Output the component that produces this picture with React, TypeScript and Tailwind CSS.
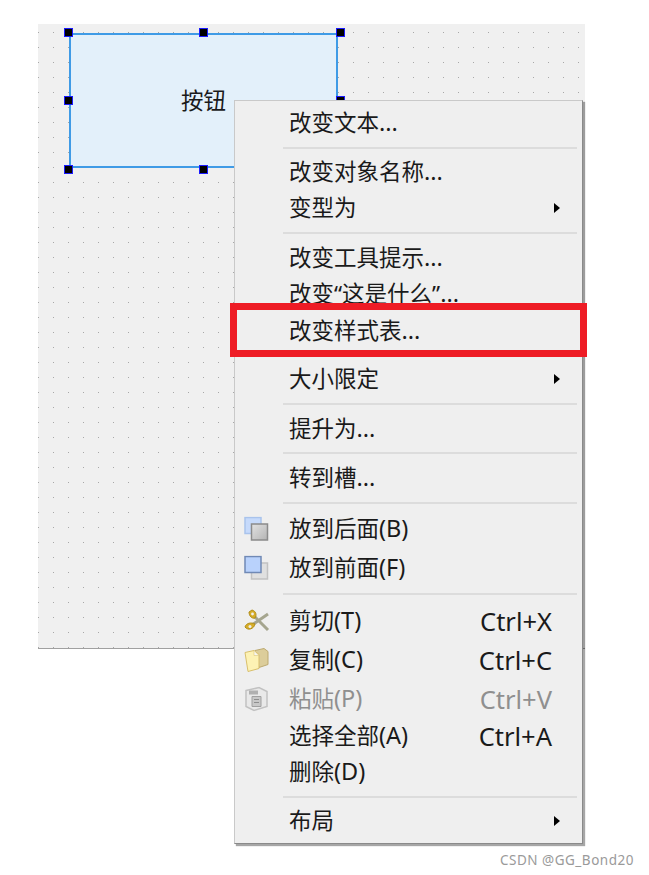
const font = { fontFamily: '"Noto Sans", "Noto Sans CJK SC", sans-serif' }

type Row =
  | { kind: "sep"; h: number }
  | { kind: "item"; h: number; label: string; tail?: string; shortcut?: string; sub?: boolean; disabled?: boolean; icon?: React.ReactNode }

const BackIcon = () => (
  <svg width="25" height="25" viewBox="0 0 25 25" className="blur-[0.4px]">
    <defs>
      <linearGradient id="backGray" x1="0" y1="0" x2="1" y2="1">
        <stop offset="0" stopColor="#e2e2e2" />
        <stop offset="1" stopColor="#b4b4b4" />
      </linearGradient>
    </defs>
    <rect x="1" y="1" width="16" height="16" fill="#c6dafb" stroke="#a9c3ec" strokeWidth="1.5" />
    <rect x="7.5" y="7.5" width="16" height="16" fill="url(#backGray)" stroke="#8b8b8b" strokeWidth="1.5" />
  </svg>
)

const FrontIcon = () => (
  <svg width="25" height="25" viewBox="0 0 25 25" className="blur-[0.4px]">
    <rect x="7.5" y="7.5" width="16" height="16" fill="#e0e0e0" stroke="#c2c2c2" strokeWidth="1.5" />
    <rect x="1" y="1" width="16" height="16" fill="#b9d2fc" stroke="#7089b5" strokeWidth="1.5" />
  </svg>
)

const CutIcon = () => (
  <svg width="26" height="24" viewBox="0 0 26 24" fill="none" className="blur-[0.4px]">
    <path d="M9 6 L24 21 M8 16 L24 5" stroke="#a5a58e" strokeWidth="3" />
    <path d="M8 1 C12 2 13 6 11 9 C8 10 5 7 5 3 Z" fill="#d6ad28" stroke="#b08c18" />
    <path d="M1 18 C2 14 7 13 11 15 C10 20 4 22 1 18 Z" fill="#d6ad28" stroke="#b08c18" />
    <circle cx="8.5" cy="5" r="1.4" fill="#efefef" />
    <circle cx="6" cy="17.5" r="1.5" fill="#efefef" />
  </svg>
)

const CopyIcon = () => (
  <svg width="25" height="25" viewBox="0 0 25 25" className="blur-[0.4px]">
    <path d="M11 3 L20 1 L24 4 V17 L15 20 Z" fill="#dccd9a" stroke="#bca970" />
    <path d="M1 5 L10 3 L15 7 V21 L4 24 Z" fill="#fdf2b4" stroke="#d8bf6c" />
    <path d="M10 3 V8 H15 Z" fill="#f7f7f0" stroke="#d8bf6c" strokeWidth="0.5" />
  </svg>
)

const PasteIcon = () => (
  <svg width="25" height="25" viewBox="0 0 25 25" className="blur-[0.4px]">
    <path d="M2 4 L15 1 L23 5 V20 L10 24 L2 20 Z" fill="#e9e9e9" stroke="#c2c2c2" strokeWidth="1.5" />
    <path d="M8 10 H17 V20 H8 Z" fill="#c8c8c8" stroke="#a0a0a0" />
    <path d="M5 4 H14 V8 H5 Z" fill="#b0b0b0" />
    <path d="M10 13 H15 M10 16 H15" stroke="#8e8e8e" />
  </svg>
)

const rows: Row[] = [
  { kind: "item", h: 37, label: "改变文本", tail: "..." },
  { kind: "sep", h: 14 },
  { kind: "item", h: 33, label: "改变对象名称", tail: "..." },
  { kind: "item", h: 39, label: "变型为", sub: true },
  { kind: "sep", h: 12 },
  { kind: "item", h: 37, label: "改变工具提示", tail: "..." },
  { kind: "item", h: 35, label: "改变“这是什么”", tail: "..." },
  { kind: "item", h: 39, label: "改变样式表", tail: "..." },
  { kind: "sep", h: 10 },
  { kind: "item", h: 37, label: "大小限定", sub: true },
  { kind: "sep", h: 14 },
  { kind: "item", h: 35, label: "提升为", tail: "..." },
  { kind: "sep", h: 14 },
  { kind: "item", h: 35, label: "转到槽", tail: "..." },
  { kind: "sep", h: 16 },
  { kind: "item", h: 35, label: "放到后面", tail: "(B)", icon: <BackIcon /> },
  { kind: "item", h: 43, label: "放到前面", tail: "(F)", icon: <FrontIcon /> },
  { kind: "sep", h: 10 },
  { kind: "item", h: 43, label: "剪切", tail: "(T)", shortcut: "Ctrl+X", icon: <CutIcon /> },
  { kind: "item", h: 35, label: "复制", tail: "(C)", shortcut: "Ctrl+C", icon: <CopyIcon /> },
  { kind: "item", h: 43, label: "粘贴", tail: "(P)", shortcut: "Ctrl+V", disabled: true, icon: <PasteIcon /> },
  { kind: "item", h: 31, label: "选择全部", tail: "(A)", shortcut: "Ctrl+A" },
  { kind: "item", h: 41, label: "删除", tail: "(D)" },
  { kind: "sep", h: 10 },
  { kind: "item", h: 37, label: "布局", sub: true },
]

const Handle = ({ className }: { className: string }) => (
  <div className={`absolute w-[9px] h-[9px] bg-black border border-[#1a1aff] ${className}`} />
)

export default function App() {
  return (
    <div className="relative w-[649px] h-[875px] bg-white overflow-hidden text-[#1a1a1a]" style={font}>
      {/* form canvas */}
      <div className="absolute left-[38px] top-[24px] w-[547px] h-[625px] bg-[#f0f0f0] border-b border-[#a0a0a0] bg-[radial-gradient(circle,#a8a8a8_0.6px,transparent_1px)] bg-[length:15px_15px] bg-[position:-7px_1px]">
        {/* selected button */}
        <div className="absolute left-[31px] top-[9px] w-[269px] h-[135px] bg-[#e3f0fa] border-2 border-[#3f9be6] flex items-center justify-center text-[22.5px]">
          <span>按钮</span>
        </div>
        <Handle className="left-[26px] top-[4px]" />
        <Handle className="left-[161px] top-[4px]" />
        <Handle className="left-[298px] top-[4px]" />
        <Handle className="left-[26px] top-[72px]" />
        <Handle className="left-[298px] top-[72px]" />
        <Handle className="left-[26px] top-[141px]" />
        <Handle className="left-[161px] top-[141px]" />
      </div>

      {/* context menu */}
      <div className="absolute left-[234px] top-[100px] w-[349px] bg-[#efefef] border border-[#c9c9c9] border-r-[#8a8a8a] border-b-[#8a8a8a] pt-[3px] pb-[4px] shadow-[2px_2px_1px_rgba(0,0,0,0.35)]">
        {rows.map((row, i) =>
          row.kind === "sep" ? (
            <div key={i} className="flex items-center pl-[48px] pr-[5px]" style={{ height: row.h }}>
              <div className="h-[2px] w-full bg-[#dcdcdc]" />
            </div>
          ) : (
            <div
              key={i}
              className={`relative flex items-center pt-[1px] pl-[54px] pr-[30px] text-[22.5px] whitespace-nowrap ${row.disabled ? "text-[#8f8f8f]" : ""}`}
              style={{ height: row.h }}
            >
              {row.icon && <span className="absolute left-[9px] top-1/2 -translate-y-1/2">{row.icon}</span>}
              <span className="flex-1">
                {row.label}
                {row.tail && <span className="text-[23.5px]">{row.tail}</span>}
              </span>
              {row.shortcut && <span className="text-[25.5px]">{row.shortcut}</span>}
              {row.sub && (
                <span className="absolute right-[22px] top-1/2 -translate-y-1/2 w-0 h-0 border-y-[5px] border-y-transparent border-l-[6px] border-l-black" />
              )}
            </div>
          ),
        )}
      </div>

      {/* red highlight */}
      <div className="absolute left-[230px] top-[303px] w-[357px] h-[54px] border-[7px] border-[#ee1c25]" />

      <div className="absolute left-[500px] top-[850px] text-[13.5px] text-[#9a9a9a] tracking-[0.5px]">CSDN @GG_Bond20</div>
    </div>
  )
}
